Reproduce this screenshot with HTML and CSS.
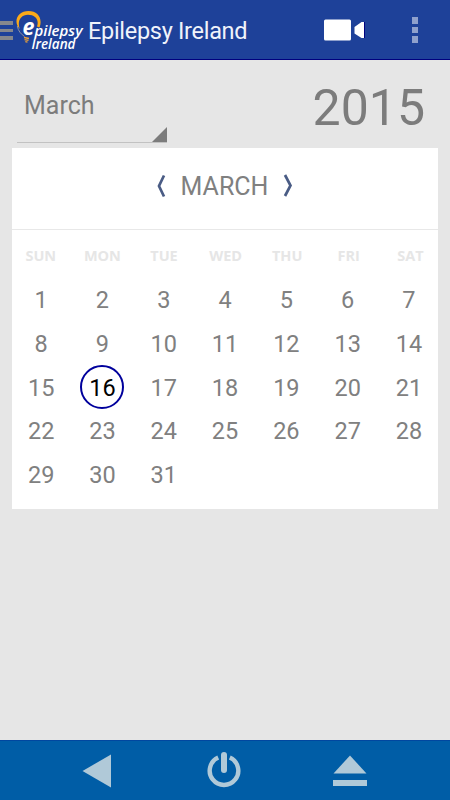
FILE: index.html
```html
<!DOCTYPE html>
<html lang="en">
<head>
    <meta charset="UTF-8">
    <meta name="viewport" content="width=device-width, initial-scale=1.0">
    <title>Epilepsy Ireland</title>
    <link rel="stylesheet" href="styles.css">
</head>
<body>
    <header class="top-bar">
        <div class="menu-icon">
            <span></span>
            <span></span>
            <span></span>
        </div>
        <svg class="logo" width="70" height="60" viewBox="14 0 70 60">
            <path d="M19.800 29 C12.500 21 18 11 28.500 11 C38 11 43 18.500 39.500 27.500 L37 26.500 C39.500 19.500 35 14.800 28 14.800 C20.500 15 17 21.500 19.800 29 Z" fill="#fbaa19"/>
            <path d="M17.300 26 C18 31 21.500 34.500 24.500 36.500" fill="none" stroke="#8f93a5" stroke-width="1"/>
            <path d="M24 37.500 L29 38.500 M24.500 39.600 L28.500 40.400 M25.300 41.600 L27.500 42.200" fill="none" stroke="#e9a03b" stroke-width="1.300"/>
            <text class="logo-e" x="22.500" y="35" textLength="12" lengthAdjust="spacingAndGlyphs">e</text>
            <text class="logo-text" x="34.500" y="36" textLength="48" lengthAdjust="spacingAndGlyphs">pilepsy</text>
            <text class="logo-text" x="31.500" y="49" textLength="44" lengthAdjust="spacingAndGlyphs">Ireland</text>
        </svg>
        <h1 class="title">Epilepsy Ireland</h1>
        <svg class="video-icon" width="42" height="24" viewBox="0 0 42 24">
            <rect x="1" y="1.500" width="27" height="21" rx="1.500" fill="#fff"/>
            <path d="M31.500 9 L38.500 4 H41 V20 H38.500 L31.500 15.500 Z" fill="#fff"/>
            <path d="M41.500 4 V20" stroke="#00007f" stroke-width="1"/>
        </svg>
        <div class="more-icon">
            <span></span>
            <span></span>
            <span></span>
        </div>
    </header>

    <main class="content">
        <div class="date-row">
            <div class="month-select">
                <span>March</span>
                <svg class="select-corner" width="15" height="15" viewBox="0 0 15 15">
                    <path d="M15 0 V15 H0 Z" fill="#7c7c7c"/>
                </svg>
            </div>
            <div class="year">2015</div>
        </div>

        <section class="calendar">
            <div class="month-nav">
                <svg width="9" height="24" viewBox="0 0 9 24">
                    <path d="M7 1.500 L2 12 L7 22.500" fill="none" stroke="#4a5c85" stroke-width="2.700"/>
                </svg>
                <span class="month-name">MARCH</span>
                <svg width="10" height="24" viewBox="0 0 10 24">
                    <path d="M2 1 L7.500 11.500 L2 22" fill="none" stroke="#4a5c85" stroke-width="2.700"/>
                </svg>
            </div>
            <div class="weekdays">
                <span>SUN</span><span>MON</span><span>TUE</span><span>WED</span><span>THU</span><span>FRI</span><span>SAT</span>
            </div>
            <div class="days">
                <span>1</span><span>2</span><span>3</span><span>4</span><span>5</span><span>6</span><span>7</span>
                <span>8</span><span>9</span><span>10</span><span>11</span><span>12</span><span>13</span><span>14</span>
                <span>15</span><span class="today">16</span><span>17</span><span>18</span><span>19</span><span>20</span><span>21</span>
                <span>22</span><span>23</span><span>24</span><span>25</span><span>26</span><span>27</span><span>28</span>
                <span>29</span><span>30</span><span>31</span>
            </div>
        </section>
    </main>

    <footer class="bottom-bar">
        <svg width="30" height="34" viewBox="0 0 30 34">
            <path d="M29 0.500 V33.500 L0.500 17 Z" fill="#b0c9d8"/>
        </svg>
        <svg class="power-icon" width="34" height="37" viewBox="0 0 34 37">
            <path d="M11.200 6.600 A14.300 14.300 0 1 0 22.800 6.600" fill="none" stroke="#b0c9d8" stroke-width="4.400"/>
            <path d="M17 4 V19" stroke="#b0c9d8" stroke-width="6" stroke-linecap="round"/>
        </svg>
        <svg width="34" height="31" viewBox="0 0 34 31">
            <path d="M17 0.500 L33.500 18.500 H0.500 Z" fill="#b0c9d8"/>
            <rect x="0" y="25" width="34" height="6" fill="#b0c9d8"/>
        </svg>
    </footer>
</body>
</html>
```

FILE: styles.css
```css
* {
    box-sizing: border-box;
}

body {
    display: flex;
    flex-direction: column;
    height: 100vh;
    margin: 0;
    background-color: #e6e6e6;
    font-family: Roboto, Arial, sans-serif;
    color: #7c7c7c;
}

/* Top bar */
.top-bar {
    display: flex;
    align-items: center;
    height: 60px;
    background-color: #1e4199;
    border-bottom: 1px solid #00007f;
}

.menu-icon {
    display: flex;
    flex-direction: column;
    gap: 4px;
    width: 13px;
    margin-top: 2px;
}

.menu-icon span {
    height: 3.500px;
    background-color: #85878d;
}

.logo {
    margin-left: 1px;
}

.logo-e {
    font: italic 700 23px "Open Sans", sans-serif;
    fill: #fff;
}

.logo-text {
    font: italic 600 15px "Open Sans", sans-serif;
    fill: #fff;
}

.title {
    width: 235px;
    margin: 3px 0 0 4px;
    font-size: 23.500px;
    font-weight: 400;
    letter-spacing: -0.300px;
    color: #f0f3fb;
}

.video-icon {
    margin-top: 1px;
}

.more-icon {
    display: flex;
    flex-direction: column;
    gap: 3px;
    margin: 1px 0 0 47px;
}

.more-icon span {
    width: 6px;
    height: 6.500px;
    background-color: #8fa0cc;
}

/* Content */
.content {
    flex: 1;
    padding: 0 12px;
}

.date-row {
    display: flex;
    justify-content: space-between;
    height: 88px;
    padding: 22px 13px 5px 5px;
}

.month-select {
    display: flex;
    justify-content: space-between;
    width: 150px;
    height: 61px;
    padding-left: 7px;
    border-bottom: 1px solid #c2c2c2;
    font-size: 25px;
    line-height: 47px;
}

.select-corner {
    align-self: flex-end;
}

.year {
    font-size: 50px;
    line-height: 52px;
}

/* Calendar */
.calendar {
    width: 426px;
    height: 361px;
    background-color: #fff;
}

.month-nav {
    display: flex;
    justify-content: center;
    align-items: center;
    gap: 15px;
    height: 82px;
    padding-bottom: 6px;
    border-bottom: 1px solid #e8e8e8;
}

.month-name {
    padding-top: 1px;
    font-size: 25px;
    color: #808080;
}

.weekdays,
.days {
    display: grid;
    text-align: center;
}

.weekdays {
    grid-template-columns: repeat(7, 61.600px);
    margin-left: -2px;
    font: 700 14.500px/51px "Open Sans", sans-serif;
    color: #e6e6e6;
}

.days {
    grid-template-columns: repeat(7, 61.300px);
    grid-auto-rows: 43.800px;
    margin: -2px 0 0 -1.500px;
    font-size: 23.500px;
    line-height: 43.800px;
    color: #808080;
}

.today {
    justify-self: center;
    width: 44px;
    height: 44px;
    margin-top: -2px;
    border: 2px solid #00009c;
    border-radius: 50%;
    line-height: 42px;
    color: #000;
}

/* Bottom bar */
.bottom-bar {
    display: flex;
    justify-content: space-between;
    align-items: center;
    height: 60px;
    padding: 0 83px 0 82px;
    background-color: #005da6;
    border-top: 1px solid #0047a0;
}

.power-icon {
    margin: -3px 0 0 2px;
}
```
